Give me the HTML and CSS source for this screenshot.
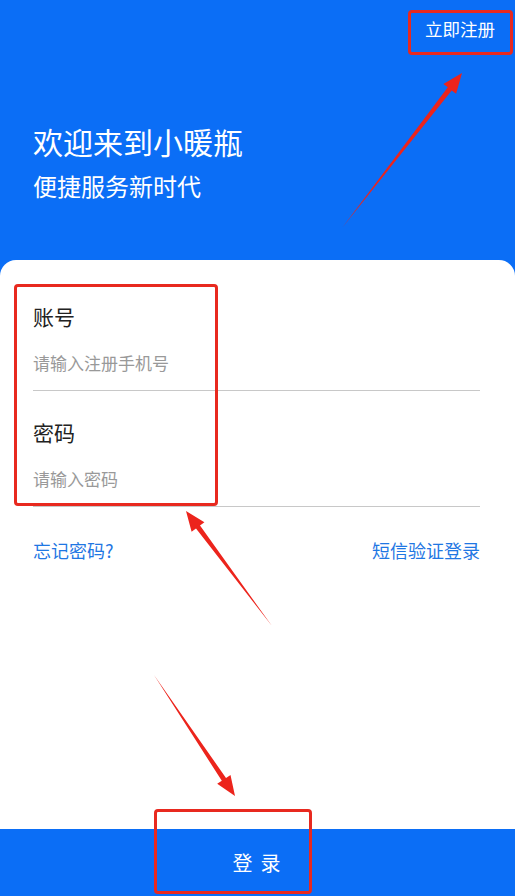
FILE: index.html
```html
<!DOCTYPE html>
<html lang="zh-CN">
<head>
    <meta charset="UTF-8">
    <meta name="viewport" content="width=device-width, initial-scale=1.0">
    <title>登录 - 小暖瓶</title>
    <link rel="stylesheet" href="styles.css">
</head>
<body>
<div class="page">
    <header class="top">
        <div class="top-bar">
            <a class="register">立即注册</a>
        </div>
        <div class="welcome">
            <h1>欢迎来到小暖瓶</h1>
            <p>便捷服务新时代</p>
        </div>
    </header>

    <main class="card">
        <div class="field">
            <label>账号</label>
            <input type="tel" placeholder="请输入注册手机号">
        </div>
        <div class="field">
            <label>密码</label>
            <input type="password" placeholder="请输入密码">
        </div>
        <div class="links">
            <a>忘记密码?</a>
            <a>短信验证登录</a>
        </div>
    </main>

    <button class="login" type="button">登录</button>

    <!-- annotation marks -->
    <div class="mark mark-register"></div>
    <div class="mark mark-form"></div>
    <div class="mark mark-login"></div>
    <svg class="arrows" width="515" height="896" viewBox="0 0 515 896">
        <polygon points="342,228 451.7,90.4 456.1,93.7 462,73 443.4,83.9 447.8,87.3"/>
        <polygon points="272,626 200,525.5 204.4,522.2 186,511 191.6,531.8 196,528.5"/>
        <polygon points="154,675 221.8,780.8 217.2,783.8 235,796 230.5,774.9 226,778"/>
    </svg>
</div>
</body>
</html>
```

FILE: styles.css
```css
body {
    margin: 0;
    font-family: "Noto Sans CJK SC", "Noto Sans", sans-serif;
    background: #0b6ef6;
}

.page {
    position: relative;
    width: 515px;
    height: 896px;
    display: flex;
    flex-direction: column;
    overflow: hidden;
}

.top {
    height: 260px;
    color: #fff;
    display: flex;
    flex-direction: column;
}

.top-bar {
    display: flex;
    justify-content: flex-end;
    padding: 16px 20px 0 0;
}

.register {
    font-size: 17.5px;
    line-height: 26px;
}

.welcome {
    padding: 79px 0 0 33px;
}

.welcome h1 {
    margin: 0;
    font-size: 30px;
    font-weight: normal;
    line-height: 40px;
}

.welcome p {
    margin: 9px 0 0;
    font-size: 24px;
    line-height: 32px;
}

.card {
    flex: 1;
    background: #fff;
    border-radius: 16px 16px 0 0;
    padding: 15px 35px 0 33px;
}

.field {
    display: flex;
    flex-direction: column;
    padding: 26px 0 15px;
    border-bottom: 1px solid #c8c8c8;
}

.field label {
    font-size: 21px;
    line-height: 30px;
    color: #222;
}

.field input {
    margin-top: 20px;
    border: none;
    outline: none;
    padding: 0;
    font-family: inherit;
    font-size: 17px;
    line-height: 24px;
    height: 24px;
    color: #333;
}

.field input::placeholder {
    color: #999;
}

.links {
    display: flex;
    justify-content: space-between;
    margin-top: 31px;
    font-size: 18px;
    line-height: 24px;
    color: #1f77e3;
}

.login {
    height: 67px;
    border: none;
    background: #0b6ef6;
    color: #fff;
    font-family: inherit;
    font-size: 20px;
    letter-spacing: 8px;
    padding: 0 0 0 6px;
}

.mark {
    position: absolute;
    border: 3px solid #e8291f;
    border-radius: 4px;
    box-sizing: border-box;
}

.mark-register {
    left: 408px;
    top: 10px;
    width: 105px;
    height: 45px;
}

.mark-form {
    left: 14px;
    top: 284px;
    width: 204px;
    height: 222px;
}

.mark-login {
    left: 154px;
    top: 809px;
    width: 158px;
    height: 85px;
}

.arrows {
    position: absolute;
    left: 0;
    top: 0;
    fill: #ec241c;
}
```
